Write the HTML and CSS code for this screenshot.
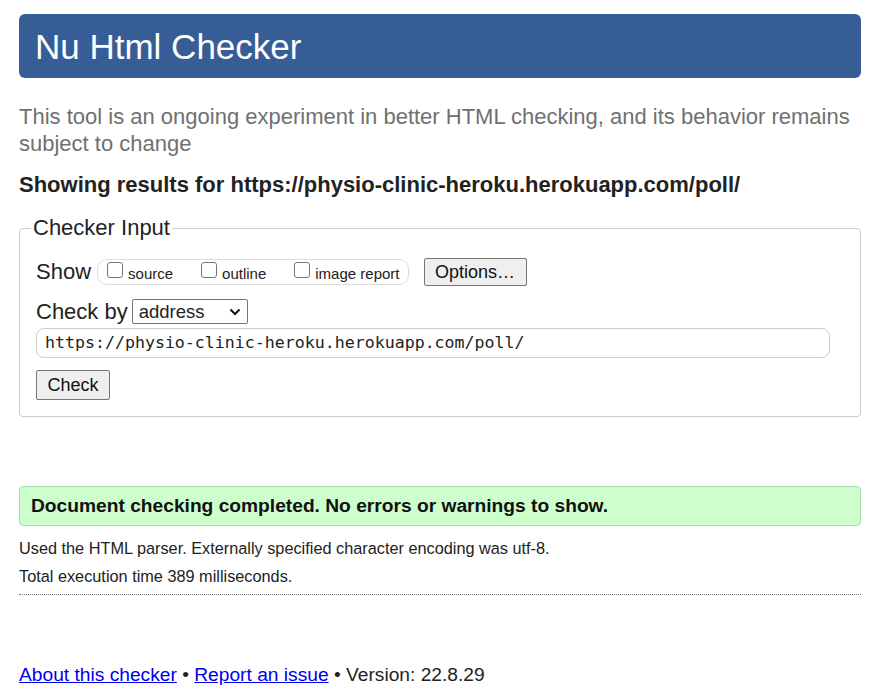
FILE: index.html
```html
<!DOCTYPE html>
<html>
<head>
<meta charset="utf-8">
<title>Nu Html Checker</title>
<link rel="stylesheet" href="styles.css">
</head>
<body>
<div class="page">
  <header class="banner"><h1>Nu Html Checker</h1></header>
  <p class="intro">This tool is an ongoing experiment in better HTML checking, and its behavior remains subject to change</p>
  <p class="results-for">Showing results for https://physio-clinic-heroku.herokuapp.com/poll/</p>
  <fieldset class="input-box">
    <legend>Checker Input</legend>
    <div class="row show-row">
      <span class="label label-show">Show</span>
      <span class="opts">
        <label class="opt"><input type="checkbox"><span>source</span></label>
        <label class="opt"><input type="checkbox"><span>outline</span></label>
        <label class="opt"><input type="checkbox"><span>image report</span></label>
      </span>
      <button class="btn btn-options">Options…</button>
    </div>
    <div class="row by-row">
      <span class="label label-by">Check by</span>
      <span class="select">address<svg width="12" height="8" viewBox="0 0 12 8"><path d="M1.5 1.5 L6 6 L10.5 1.5" fill="none" stroke="#111" stroke-width="2"/></svg></span>
    </div>
    <div class="url">https://physio-clinic-heroku.herokuapp.com/poll/</div>
    <button class="btn btn-check">Check</button>
  </fieldset>
  <div class="success">Document checking completed. No errors or warnings to show.</div>
  <p class="detail">Used the HTML parser. Externally specified character encoding was utf-8.</p>
  <p class="detail">Total execution time 389 milliseconds.</p>
  <hr class="dots">
  <footer class="foot"><a href="#">About this checker</a> • <a href="#">Report an issue</a> • Version: 22.8.29</footer>
</div>
</body>
</html>
```
FILE: styles.css
```css
html, body { margin: 0; padding: 0; background: #fff; }
body { font-family: "Liberation Sans", Arial, sans-serif; color: #222; }
.page { margin-left: 19px; width: 842px; padding-top: 14px; }
.banner { background: #365d95; border-radius: 6px; height: 64px; display: flex; align-items: center; }
.banner h1 { margin: 0; padding-left: 16px; color: #fff; font-weight: normal; font-size: 35px; line-height: 1; }
.intro { margin: 25px 0 0; font-size: 22px; line-height: 27px; color: #707070; }
.results-for { margin: 15px 0 0; font-size: 22px; font-weight: bold; line-height: 26px; }
.input-box { margin: 18px 0 0; border: 1px solid #ccc; border-radius: 4px; padding: 0 16px 16px; }
.input-box legend { font-size: 22px; line-height: 24px; padding: 0 2px; margin-left: -5px; }
.row { display: flex; align-items: center; }
.show-row { margin-top: 18px; height: 28px; }
.label { font-size: 22px; }
.label-show { margin-right: 6px; }
.label-by { margin-right: 4px; }
.opts { display: flex; align-items: center; border: 1px solid #ddd; border-radius: 10px; height: 24px; padding: 0 8px 0 9px; gap: 28px; }
.opt { display: flex; align-items: center; font-size: 15px; gap: 5px; }
.opt span { position: relative; top: 1px; }
.opt input { appearance: none; -webkit-appearance: none; margin: 0; width: 16px; height: 16px; border: 1px solid #767676; border-radius: 3px; background: #fff; position: relative; top: -2px; }
.btn { font-family: "Liberation Sans", Arial, sans-serif; font-size: 18px; color: #111; background: #efefef; border: 1px solid #767676; border-radius: 2px; padding: 0 10px; }
.btn-options { margin-left: 15px; height: 28px; width: 103px; }
.by-row { margin-top: 13px; height: 25px; }
.select { display: flex; align-items: center; justify-content: space-between; box-sizing: border-box; width: 116px; height: 25px; border: 1px solid #767676; border-radius: 2px; padding: 0 6px 0 6px; font-size: 18.5px; }
.url { margin-top: 4px; box-sizing: border-box; width: 794px; height: 30px; border: 1px solid #ccc; border-radius: 8px; padding: 0 8px; font-family: "DejaVu Sans Mono", "Liberation Mono", monospace; font-size: 16.6px; line-height: 28px; color: #222; }
.btn-check { display: block; margin-top: 12px; height: 30px; width: 74px; }
.success { margin-top: 69px; box-sizing: border-box; height: 40px; background: #ccffcc; border: 1px solid #aadaaa; border-radius: 4px; padding: 0 11px; font-size: 19.2px; font-weight: bold; line-height: 38px; color: #111; }
.detail { margin: 12px 0 0; font-size: 16.3px; line-height: 20px; }
.detail + .detail { margin-top: 8px; }
.dots { margin: 8px 0 0; border: 0; border-top: 1px dotted #777; height: 0; }
.foot { margin-top: 68px; font-size: 19.2px; line-height: 24px; color: #222; }
.foot a { color: #0000ee; }
```
